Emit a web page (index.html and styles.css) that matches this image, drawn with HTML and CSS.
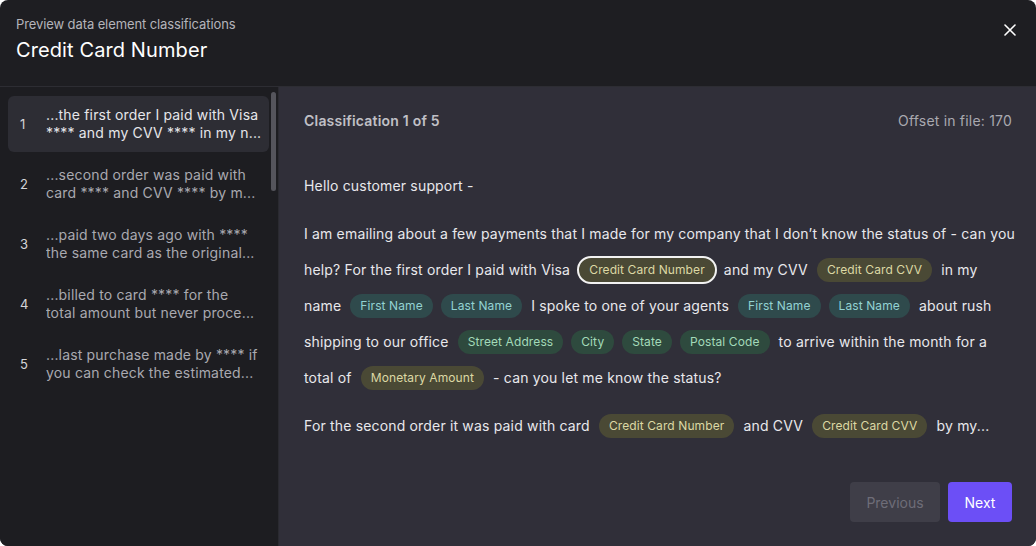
FILE: index.html
```html
<!DOCTYPE html>
<html lang="en">

<head>
  <meta charset="UTF-8">
  <meta name="viewport" content="width=device-width, initial-scale=1.0">
  <title>Preview data element classifications</title>
  <link rel="stylesheet" href="styles.css">
</head>

<body>
  <div class="modal">
    <header class="modal-header">
      <div>
        <p class="subtitle">Preview data element classifications</p>
        <h1>Credit Card Number</h1>
      </div>
      <button class="close" aria-label="Close">
        <svg width="12" height="12" viewBox="0 0 12 12"><path d="M1 1L11 11M11 1L1 11" stroke="#fff" stroke-width="1.6" stroke-linecap="round"/></svg>
      </button>
    </header>

    <div class="modal-body">
      <!-- Matches list -->
      <aside class="sidebar">
        <ul class="matches">
          <li class="match active"><span class="num">1</span><span class="snippet">...the first order I paid with Visa<br>**** and my CVV **** in my n...</span></li>
          <li class="match"><span class="num">2</span><span class="snippet">...second order was paid with<br>card **** and CVV **** by m...</span></li>
          <li class="match"><span class="num">3</span><span class="snippet">...paid two days ago with ****<br>the same card as the original...</span></li>
          <li class="match"><span class="num">4</span><span class="snippet">...billed to card **** for the<br>total amount but never proce...</span></li>
          <li class="match"><span class="num">5</span><span class="snippet">...last purchase made by **** if<br>you can check the estimated...</span></li>
        </ul>
        <div class="scrollbar"></div>
      </aside>

      <section class="preview">
        <div class="preview-top">
          <span class="count">Classification 1 of 5</span>
          <span class="offset">Offset in file: 170</span>
        </div>

        <div class="content">
          <p>Hello customer support -</p>
          <p>I am emailing about a few payments that I made for my company that I don’t know the status of - can you help? For the first order I paid with Visa <span class="tag olive current">Credit Card Number</span> and my CVV <span class="tag olive">Credit Card CVV</span> in my name <span class="tag teal">First Name</span><span class="tag teal follow">Last Name</span> I spoke to one of your agents <span class="tag teal">First Name</span><span class="tag teal follow">Last Name</span> about rush shipping to our office <span class="tag green">Street Address</span><span class="tag green follow">City</span><span class="tag green follow">State</span><span class="tag green follow">Postal Code</span> to arrive within the month for a total of <span class="tag olive">Monetary Amount</span> - can you let me know the status?</p>
          <p>For the second order it was paid with card <span class="tag olive">Credit Card Number</span> and CVV <span class="tag olive">Credit Card CVV</span> by my...</p>
        </div>

        <div class="actions">
          <button class="btn btn-secondary" disabled>Previous</button>
          <button class="btn btn-primary">Next</button>
        </div>
      </section>
    </div>
  </div>
</body>

</html>
```

FILE: styles.css
```css
* {
  margin: 0;
  padding: 0;
  box-sizing: border-box;
}

body {
  font-family: 'Inter', 'Liberation Sans', sans-serif;
  background-color: #ffffff;
  width: 1036px;
  height: 546px;
  overflow: hidden;
}

.modal {
  width: 1036px;
  height: 546px;
  background-color: #1e1e22;
  border-radius: 8px;
  overflow: hidden;
  display: flex;
  flex-direction: column;
}

.modal-header {
  height: 87px;
  padding: 16px 16px 0 16px;
  display: flex;
  justify-content: space-between;
  align-items: flex-start;
  border-bottom: 1px solid #2d2d33;
}

.subtitle {
  font-size: 13px;
  line-height: 16px;
  letter-spacing: -0.1px;
  color: #b4b4ba;
}

h1 {
  font-size: 20px;
  font-weight: 400;
  line-height: 24px;
  letter-spacing: 0.1px;
  color: #ffffff;
  margin-top: 6px;
}

.close {
  background: none;
  border: none;
  width: 20px;
  height: 20px;
  margin-top: 4px;
  display: flex;
  align-items: center;
  justify-content: center;
  cursor: pointer;
}

.modal-body {
  flex: 1;
  display: flex;
  min-height: 0;
}

/* Left list of matches */
.sidebar {
  width: 279px;
  background-color: #1d1d21;
  border-right: 1px solid #2a2a30;
  position: relative;
  padding: 9px 9px 0 8px;
}

.matches {
  list-style: none;
}

.match {
  display: flex;
  align-items: center;
  height: 56px;
  margin-bottom: 4px;
  padding: 0 4px 0 12px;
  border-radius: 6px;
  font-size: 14px;
  line-height: 18px;
  letter-spacing: 0.17px;
  color: #a9a9b0;
}

.match.active {
  background-color: #2d2d34;
  color: #e6e6ea;
}

.num {
  width: 26px;
  flex-shrink: 0;
  font-size: 13px;
  color: #d4d4d8;
}

.snippet {
  white-space: nowrap;
  overflow: hidden;
}

.scrollbar {
  position: absolute;
  top: 5px;
  right: 2px;
  width: 5px;
  height: 99px;
  border-radius: 3px;
  background-color: #55555c;
}

/* Right preview */
.preview {
  flex: 1;
  background-color: #302f39;
  padding: 23px 24px 24px 25px;
  display: flex;
  flex-direction: column;
}

.preview-top {
  display: flex;
  justify-content: space-between;
  align-items: center;
  height: 20px;
  font-size: 14px;
  letter-spacing: 0.2px;
}

.count {
  font-weight: 600;
  color: #c0c0c6;
}

.offset {
  color: #a9a9b0;
}

.content {
  margin-top: 38px;
  margin-right: -4px;
  font-size: 14px;
  line-height: 36px;
  letter-spacing: 0.17px;
  color: #e8e8ec;
}

.content p {
  margin-bottom: 12px;
}

.tag {
  display: inline-block;
  height: 24px;
  line-height: 24px;
  padding: 0 10px;
  margin: 0 5px;
  border-radius: 12px;
  font-size: 12px;
  letter-spacing: 0.1px;
  vertical-align: middle;
  position: relative;
  top: -1px;
}

.tag.follow {
  margin-left: 3px;
}

.olive {
  background-color: #4a4935;
  color: #dcd8a4;
}

.teal {
  background-color: #2f4a4c;
  color: #93d2d2;
}

.green {
  background-color: #2e4a3e;
  color: #a3dab9;
}

.tag.current {
  height: 28px;
  line-height: 24px;
  margin: 0 3px;
  border: 2px solid #f2f2f2;
  border-radius: 14px;
}

.actions {
  margin-top: auto;
  display: flex;
  justify-content: flex-end;
  gap: 8px;
}

.btn {
  height: 40px;
  padding: 0 16px;
  border: none;
  border-radius: 4px;
  font-family: inherit;
  font-size: 14px;
  cursor: pointer;
}

.btn-secondary {
  width: 90px;
  background-color: #3f3e48;
  color: #6e6d78;
}

.btn-primary {
  width: 64px;
  background-color: #6c4ff6;
  color: #ffffff;
}
```
